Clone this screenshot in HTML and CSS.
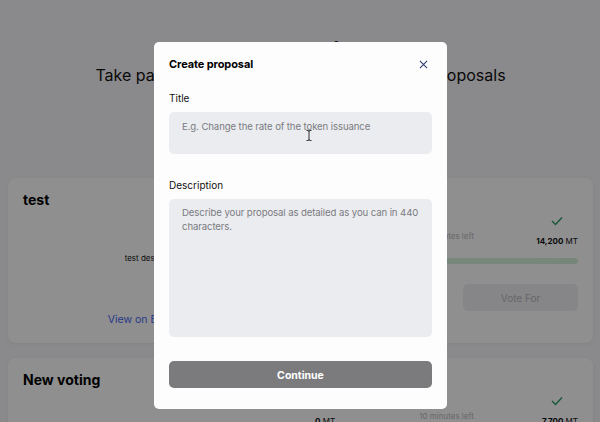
FILE: index.html
```html
<!DOCTYPE html>
<html lang="en">
<head>
<meta charset="utf-8">
<title>Create proposal</title>
<link rel="stylesheet" href="styles.css">
</head>
<body>
<div class="page">
  <header class="hero">
    <h1 class="hero-title">DAO Voting</h1>
    <p class="hero-sub">Take part in the decision making of the DAO proposals</p>
  </header>

  <section class="cards">
    <article class="card">
      <div class="card-info">
        <h2 class="card-title">test</h2>
        <p class="card-desc">test description</p>
        <a class="card-link" href="#">View on Etherscan</a>
      </div>
      <div class="card-vote">
        <div class="stats">
          <div class="stat stat-left">
            <span class="stat-icon"></span>
            <span class="amount"><b>0</b> MT</span>
          </div>
          <div class="stat stat-mid">
            <span class="time">10 minutes left</span>
          </div>
          <div class="stat stat-right">
            <svg class="check" viewBox="0 0 12 10" width="12" height="10"><polyline points="1,5 4.5,8.5 11,1.5" fill="none" stroke="currentColor" stroke-width="1.4"/></svg>
            <span class="amount"><b>14,200</b> MT</span>
          </div>
        </div>
        <div class="bar"><div class="bar-fill"></div></div>
        <div class="buttons">
          <button class="vote-btn">Vote Against</button>
          <button class="vote-btn">Vote For</button>
        </div>
      </div>
    </article>

    <article class="card">
      <div class="card-info">
        <h2 class="card-title">New voting</h2>
        <p class="card-desc">new voting description</p>
        <a class="card-link" href="#">View on Etherscan</a>
      </div>
      <div class="card-vote">
        <div class="stats">
          <div class="stat stat-left">
            <span class="stat-icon"></span>
            <span class="amount"><b>0</b> MT</span>
          </div>
          <div class="stat stat-mid">
            <span class="time">10 minutes left</span>
          </div>
          <div class="stat stat-right">
            <svg class="check" viewBox="0 0 12 10" width="12" height="10"><polyline points="1,5 4.5,8.5 11,1.5" fill="none" stroke="currentColor" stroke-width="1.4"/></svg>
            <span class="amount"><b>7,700</b> MT</span>
          </div>
        </div>
        <div class="bar"><div class="bar-fill"></div></div>
        <div class="buttons">
          <button class="vote-btn">Vote Against</button>
          <button class="vote-btn">Vote For</button>
        </div>
      </div>
    </article>
  </section>
</div>

<div class="overlay"></div>

<div class="modal">
  <div class="modal-head">
    <h3 class="modal-title">Create proposal</h3>
    <svg class="close" viewBox="0 0 10 10" width="10" height="10"><path d="M1 1 L9 9 M9 1 L1 9" stroke="currentColor" stroke-width="1.2" fill="none"/></svg>
  </div>
  <label class="field-label">Title</label>
  <div class="field field-title">E.g. Change the rate of the token issuance</div>
  <label class="field-label field-label-desc">Description</label>
  <div class="field field-desc">Describe your proposal as detailed as you can in 440 characters.</div>
  <button class="continue">Continue</button>
  <svg class="ibeam" viewBox="0 0 6 11" width="6" height="11"><path d="M0.5 0.5 H2.3 M3.7 0.5 H5.5 M3 1 V10 M0.5 10.5 H2.3 M3.7 10.5 H5.5 M2.3 0.5 Q3 0.7 3 1.5 Q3 0.7 3.7 0.5 M2.3 10.5 Q3 10.3 3 9.5 Q3 10.3 3.7 10.5" stroke="#222" stroke-width="0.9" fill="none"/></svg>
</div>
</body>
</html>
```

FILE: styles.css
```css
* { box-sizing: border-box; }

html, body {
  margin: 0;
  padding: 0;
  height: 100%;
  overflow: hidden;
}

body {
  background: #f7f6f9;
  font-family: Inter, "Noto Sans", "Liberation Sans", sans-serif;
  color: #111;
}

.page {
  padding: 0 7px 0 8px;
}

.hero {
  text-align: center;
  padding-top: 41px;
}

.hero-title {
  margin: 0;
  font-size: 26px;
  line-height: 24px;
  font-weight: 700;
  letter-spacing: -0.3px;
}

.hero-sub {
  margin: 0;
  font-size: 16px;
  line-height: 20px;
  color: #111;
}

.cards {
  margin-top: 93px;
  display: flex;
  flex-direction: column;
  gap: 15px;
}

.card {
  background: #fff;
  border-radius: 8px;
  box-shadow: 0 1px 5px rgba(0, 0, 0, 0.07);
  display: grid;
  grid-template-columns: 292px 1fr;
  height: 165px;
}

.card-info {
  padding: 12px 15px 15px;
  display: flex;
  flex-direction: column;
}

.card-title {
  margin: 0;
  font-size: 14px;
  line-height: 20px;
  font-weight: 700;
  color: #000;
}

.card-desc {
  margin: 41px 0 0;
  text-align: center;
  font-size: 8px;
  line-height: 14px;
  color: #1a1a1a;
}

.card-link {
  margin-top: 48px;
  text-align: center;
  font-size: 10.5px;
  line-height: 14px;
  color: #4a66f0;
  text-decoration: none;
}

.card-vote {
  padding: 36px 15px 0 15px;
}

.stats {
  display: grid;
  grid-template-columns: 1fr 1fr 1fr;
  align-items: start;
}

.stat {
  display: flex;
  flex-direction: column;
}

.stat-left { align-items: flex-start; }
.stat-mid { align-items: center; padding-top: 15px; }
.stat-right { align-items: flex-end; }

.stat-icon {
  height: 14px;
}

.check {
  color: #2c9c62;
  margin: 2px 15px 2px 0;
}

.amount {
  margin-top: 6px;
  font-size: 8px;
  line-height: 14px;
  color: #111;
}

.amount b { font-weight: 700; }

.time {
  font-size: 8px;
  line-height: 14px;
  color: #b9b9bd;
}

.bar {
  margin-top: 10px;
  height: 6px;
  border-radius: 3px;
  background: #e8e8ec;
  overflow: hidden;
}

.bar-fill {
  width: 100%;
  height: 100%;
  background: linear-gradient(90deg, #e6ece8 0%, #d6f2dc 20%, #d3f1da 100%);
}

.buttons {
  margin-top: 20px;
  display: grid;
  grid-template-columns: 1fr 1fr;
  gap: 33px;
}

.vote-btn {
  height: 27px;
  border: none;
  border-radius: 5px;
  background: #efeef2;
  color: #b6b6ba;
  font-family: inherit;
  font-size: 10px;
}

.overlay {
  position: fixed;
  inset: 0;
  background: rgba(0, 0, 0, 0.44);
}

.modal {
  position: fixed;
  top: 42px;
  left: 154px;
  width: 293px;
  height: 367px;
  background: #fdfdfe;
  border-radius: 5px;
  padding: 14px 15px 0;
  display: flex;
  flex-direction: column;
}

.modal-head {
  display: flex;
  justify-content: space-between;
  align-items: center;
  height: 16px;
}

.modal-title {
  margin: 0;
  font-size: 11px;
  line-height: 16px;
  font-weight: 700;
  letter-spacing: -0.1px;
  color: #000;
}

.close {
  color: #2f3b6e;
  margin-right: 4px;
  width: 9px;
  height: 9px;
}

.field-label {
  margin-top: 19px;
  font-size: 10px;
  line-height: 14px;
  color: #111;
}

.field-label-desc {
  margin-top: 24px;
}

.field {
  margin-top: 7px;
  background: #ebecf0;
  border-radius: 5px;
  padding: 8px 13px 7px;
  font-size: 9.6px;
  letter-spacing: -0.1px;
  line-height: 14px;
  color: #7a7b80;
}

.field-title { height: 42px; }
.field-desc { height: 138px; padding-top: 7px; }

.continue {
  margin-top: 24px;
  height: 27px;
  padding-top: 2px;
  border: none;
  border-radius: 5px;
  background: #7b7b7d;
  color: #fff;
  font-family: inherit;
  font-size: 10.5px;
  font-weight: 700;
}

.ibeam {
  position: absolute;
  left: 152px;
  top: 88px;
}
```
